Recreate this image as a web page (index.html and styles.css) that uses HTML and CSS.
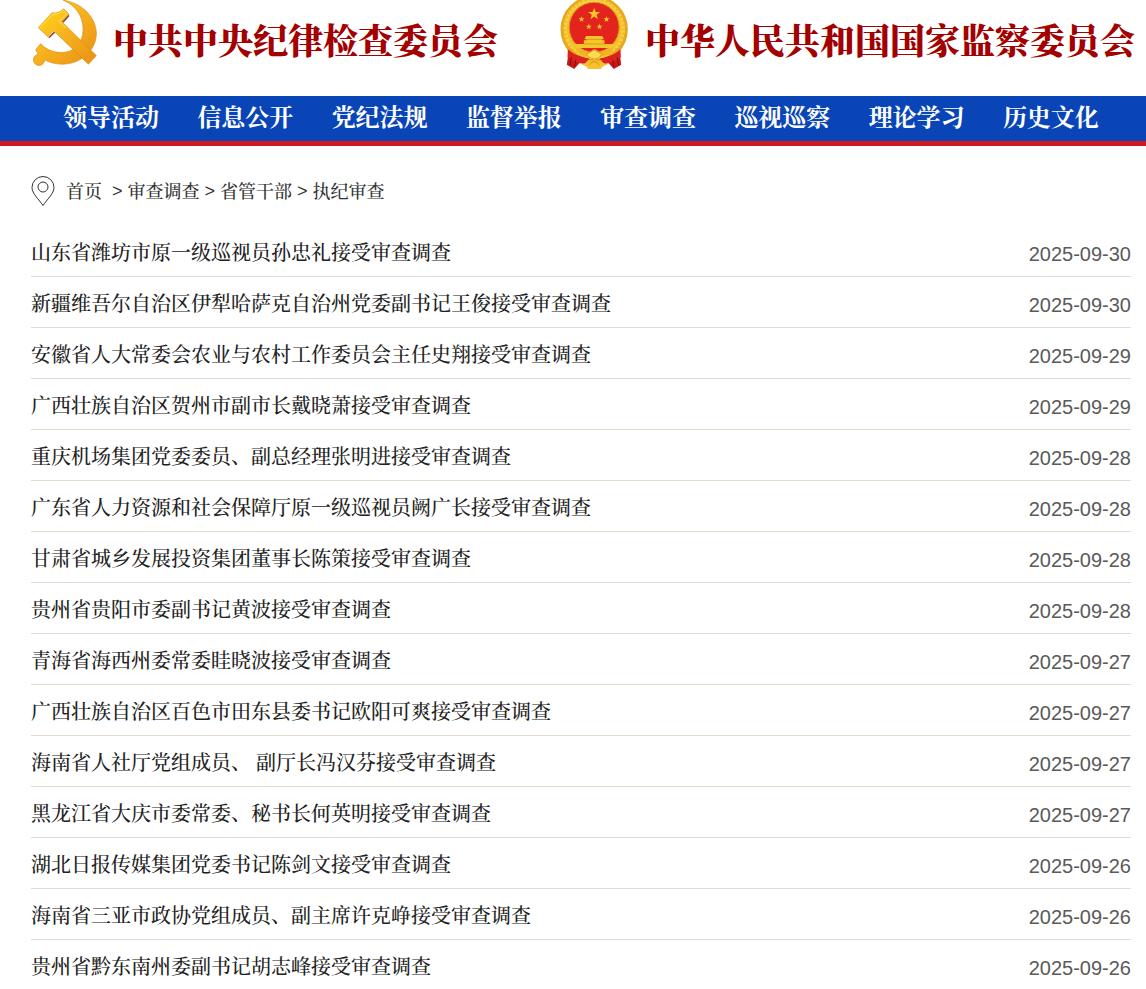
FILE: index.html
```html
<!DOCTYPE html>
<html lang="zh-CN">
<head>
    <meta charset="UTF-8">
    <meta name="viewport" content="width=device-width, initial-scale=1.0">
    <title>执纪审查</title>
    <link rel="stylesheet" href="styles.css">
</head>
<body>
    <header class="header">
        <div class="brand">
            <svg class="party-emblem" viewBox="39 0 193 201" aria-hidden="true">
                <defs>
                    <linearGradient id="gold" x1="0" y1="0" x2="1" y2="1">
                        <stop offset="0" stop-color="#ffd71c"/>
                        <stop offset="0.5" stop-color="#f6b01c"/>
                        <stop offset="1" stop-color="#e98f16"/>
                    </linearGradient>
                </defs>
                <path d="M85 112l17-17 4 3-18 17zM127 64l19-20 3 4-18 20z" fill="#8c4a2c"/>
                <path d="M130 0C184 8 228 48 230 98C231 151 184 193 127 193C106 193 88 188 74 180A17 17 0 1 1 55 163L47 150L62 131C79 150 101 158 126 158C165 158 190 128 190 88C190 48 168 16 130 0Z" fill="url(#gold)" stroke="#dc8d18" stroke-width="2"/>
                <path d="M55 83L96 38Q114 42 132 26L147 42L125 64L230 167L206 193L101 92L84 110Z" fill="url(#gold)" stroke="#dc8d18" stroke-width="2"/>
                <path d="M61 83L97 43Q116 44 131 31L140 42L118 64L137 83" fill="none" stroke="#ffe34f" stroke-width="3"/>
            </svg>
            <span class="brand-name">中共中央纪律检查委员会</span>
        </div>
        <div class="brand">
            <svg class="state-emblem" viewBox="56 0 206 210" aria-hidden="true">
                <defs>
                    <path id="star" d="M0-10L2.4-3.2L9.5-3.1L3.8 1.2L5.9 8.1L0 4L-5.9 8.1L-3.8 1.2L-9.5-3.1L-2.4-3.2Z" fill="#f5c52c"/>
                </defs>
                <path d="M83 144L76 194L98 207L119 184L159 195L196 184L217 207L239 194L233 144Z" fill="#c81717"/>
                <circle cx="158" cy="92" r="88" fill="#f2bd2b"/>
                <circle cx="158" cy="88" r="96" fill="none" stroke="#e4a91c" stroke-width="10"/>
                <circle cx="158" cy="86" r="87" fill="none" stroke="#f8cc3c" stroke-width="10"/>
                <circle cx="158" cy="86" r="89" fill="none" stroke="#e9b228" stroke-width="7" stroke-dasharray="4 9"/>
                <circle cx="158" cy="82" r="75" fill="#e3241c" stroke="#d99a18" stroke-width="3"/>
                <use href="#star" transform="translate(158 42) scale(1.9)"/>
                <use href="#star" transform="translate(120 58) scale(.95)"/>
                <use href="#star" transform="translate(195 58) scale(.95)"/>
                <use href="#star" transform="translate(142 80) scale(.95)"/>
                <use href="#star" transform="translate(174 80) scale(.95)"/>
                <path d="M134 108h48l5 9h-6v4h8v11h-62v-11h8v-4h-6zM94 132h128l-9 12H103z" fill="#f6c62d"/>
                <path d="M130 118h56M124 132h70" stroke="#c78314" stroke-width="2"/>
                <path d="M101 143Q125 154 144 157L154 149Q160 145 166 151L176 156Q200 152 216 142L206 160Q187 171 171 169L158 177L145 169Q115 171 101 143Z" fill="#efb323"/>
                <path d="M79 148Q105 171 144 176L129 192Q103 190 78 172ZM237 148Q212 171 173 176L188 192Q214 190 238 172Z" fill="#dd211c"/>
                <path d="M144 158l14-8 14 8 9 4-8 10-15 5-15-5-8-10z" fill="#ffdb54" stroke="#d49217" stroke-width="2"/>
                <path d="M119 193l13-3 8-10 14 4 5-4 5 4 14-4 8 10 13 3-14 6-8 8h-36l-8-8z" fill="#f6c12b"/>
                <path d="M143 195q15-20 31 0" fill="none" stroke="#cf8f17" stroke-width="3"/>
                <path d="M90 171l-5 26M103 179l-3 22M227 171l5 26M214 179l3 22" stroke="#8e0c0c" stroke-width="3"/>
            </svg>
            <span class="brand-name">中华人民共和国国家监察委员会</span>
        </div>
    </header>

    <nav class="nav">
        <a href="#">领导活动</a>
        <a href="#">信息公开</a>
        <a href="#">党纪法规</a>
        <a href="#">监督举报</a>
        <a href="#">审查调查</a>
        <a href="#">巡视巡察</a>
        <a href="#">理论学习</a>
        <a href="#">历史文化</a>
    </nav>

    <main class="content">
        <div class="breadcrumb">
            <svg class="pin" viewBox="0 0 24 31" aria-hidden="true">
                <path d="M12 29.5C8 23.5 1 17.5 1 11.5a11 11 0 0 1 22 0C23 17.5 16 23.5 12 29.5Z"/>
                <circle cx="12" cy="11" r="5"/>
            </svg>
            <a class="home" href="#">首页</a>
            <span>&gt;</span>
            <a href="#">审查调查</a>
            <span>&gt;</span>
            <a href="#">省管干部</a>
            <span>&gt;</span>
            <a href="#">执纪审查</a>
        </div>

        <ul class="news-list">
            <li><a href="#">山东省潍坊市原一级巡视员孙忠礼接受审查调查</a><time>2025-09-30</time></li>
            <li><a href="#">新疆维吾尔自治区伊犁哈萨克自治州党委副书记王俊接受审查调查</a><time>2025-09-30</time></li>
            <li><a href="#">安徽省人大常委会农业与农村工作委员会主任史翔接受审查调查</a><time>2025-09-29</time></li>
            <li><a href="#">广西壮族自治区贺州市副市长戴晓萧接受审查调查</a><time>2025-09-29</time></li>
            <li><a href="#">重庆机场集团党委委员、副总经理张明进接受审查调查</a><time>2025-09-28</time></li>
            <li><a href="#">广东省人力资源和社会保障厅原一级巡视员阙广长接受审查调查</a><time>2025-09-28</time></li>
            <li><a href="#">甘肃省城乡发展投资集团董事长陈策接受审查调查</a><time>2025-09-28</time></li>
            <li><a href="#">贵州省贵阳市委副书记黄波接受审查调查</a><time>2025-09-28</time></li>
            <li><a href="#">青海省海西州委常委眭晓波接受审查调查</a><time>2025-09-27</time></li>
            <li><a href="#">广西壮族自治区百色市田东县委书记欧阳可爽接受审查调查</a><time>2025-09-27</time></li>
            <li><a href="#">海南省人社厅党组成员、 副厅长冯汉芬接受审查调查</a><time>2025-09-27</time></li>
            <li><a href="#">黑龙江省大庆市委常委、秘书长何英明接受审查调查</a><time>2025-09-27</time></li>
            <li><a href="#">湖北日报传媒集团党委书记陈剑文接受审查调查</a><time>2025-09-26</time></li>
            <li><a href="#">海南省三亚市政协党组成员、副主席许克峥接受审查调查</a><time>2025-09-26</time></li>
            <li><a href="#">贵州省黔东南州委副书记胡志峰接受审查调查</a><time>2025-09-26</time></li>
        </ul>
    </main>
</body>
</html>
```

FILE: styles.css
```css
* {
    box-sizing: border-box;
}

body {
    margin: 0;
    background-color: #fff;
    color: #222;
    font-family: "Liberation Serif", "Noto Serif CJK SC", "Noto Sans CJK SC", serif;
}

a {
    color: inherit;
    text-decoration: none;
}

/* Header with the two emblems */
.header {
    display: flex;
    justify-content: space-between;
    align-items: flex-start;
    height: 96px;
    padding: 0 11px 0 33px;
}

.brand {
    display: flex;
    align-items: flex-start;
    gap: 16px;
}

.party-emblem {
    width: 64px;
    height: 67px;
}

.state-emblem {
    width: 69px;
    height: 70px;
}

.brand-name {
    padding-top: 17px;
    color: #a30000;
    font-size: 35px;
    font-weight: 900;
    line-height: 52px;
    white-space: nowrap;
}

/* Main navigation */
.nav {
    display: grid;
    grid-template-columns: repeat(8, 1fr);
    height: 50px;
    padding: 0 28px 0 44px;
    background-color: #0a45b8;
    border-bottom: 5px solid #cf181f;
}

.nav a {
    color: #fff;
    font-size: 24px;
    font-weight: bold;
    line-height: 44px;
    text-align: center;
    white-space: nowrap;
}

.content {
    padding: 28px 15px 0 31px;
}

.breadcrumb {
    display: flex;
    align-items: center;
    gap: 5px;
    height: 34px;
    color: #333;
    font-size: 18px;
    font-weight: 500;
    line-height: 26px;
}

.breadcrumb span {
    font-family: "Liberation Sans", Arial, sans-serif;
}

.pin {
    width: 24px;
    height: 31px;
    margin-right: 6px;
    fill: none;
    stroke: #333;
    stroke-width: 1;
}

.breadcrumb a {
    padding-top: 2px;
}

.home {
    margin-right: 5px;
}

/* News list */
.news-list {
    margin: 18px 0 0;
    padding: 0;
    list-style: none;
}

.news-list li {
    display: flex;
    justify-content: space-between;
    height: 51px;
    border-bottom: 1px solid #e4dbce;
    font-size: 20px;
    font-weight: 500;
    line-height: 54px;
}

.news-list li:last-child {
    height: 48px;
    border-bottom: 0;
}

.news-list time {
    color: #5a5a5a;
    font-family: "Liberation Sans", Arial, sans-serif;
    line-height: 56px;
}
```
